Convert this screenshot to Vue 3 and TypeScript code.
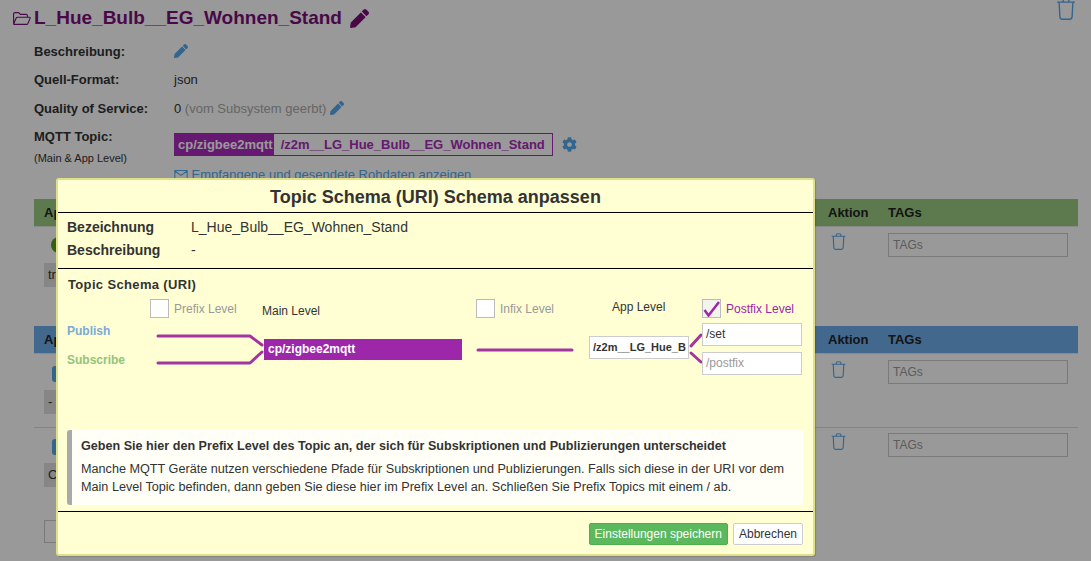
<script setup lang="ts">
const penPath = 'M497.9 142.1l-46.1 46.1c-4.7 4.7-12.3 4.7-17 0l-111-111c-4.7-4.7-4.7-12.3 0-17l46.1-46.1c18.7-18.7 49.1-18.7 67.9 0l60.1 60.1c18.8 18.7 18.8 49.1 0 67.9zM284.2 99.8L21.6 362.4.4 483.9c-2.9 16.4 11.4 30.6 27.8 27.8l121.5-21.3 262.6-262.6c4.7-4.7 4.7-12.3 0-17l-111-111c-4.8-4.7-12.4-4.7-17.1 0z'
const trashPath = 'M1 5h22M8.500 5V3a2 2 0 0 1 2-2h3a2 2 0 0 1 2 2v2M3.500 5l1 18a3 3 0 0 0 3 3h9a3 3 0 0 0 3-3l1-18'
const blueRows = [
  { cls: 'row-b', chip: '-' },
  { cls: 'row-c', chip: 'C' },
]
</script>

<template>
  <div class="page">
    <div class="head">
      <svg class="folder" viewBox="0 0 18 13" width="18" height="13"><path d="M.6 12V2A1.400 1.400 0 0 1 2 .6h3.600l1.800 1.800H13a1.400 1.400 0 0 1 1.400 1.400v1.400M.6 12l2.600-6a1.300 1.300 0 0 1 1.200-.8h12a.8.8 0 0 1 .7 1.200l-2.300 5.300a1.300 1.300 0 0 1-1.200.7H1.400A.8.8 0 0 1 .6 12z" fill="none" stroke="currentColor" stroke-width="1.100"/></svg>
      <h1>L_Hue_Bulb__EG_Wohnen_Stand</h1>
      <svg class="pen" viewBox="0 0 512 512" width="19" height="19"><path fill="currentColor" :d="penPath"/></svg>
      <svg class="trash top-trash" viewBox="0 0 24 27" width="20" height="22"><path :d="trashPath" fill="none" stroke="currentColor" stroke-width="1.700"/></svg>
    </div>

    <dl class="meta">
      <dt>Beschreibung:</dt>
      <dd><svg class="pen-sm" viewBox="0 0 512 512" width="14" height="14"><path fill="currentColor" :d="penPath"/></svg></dd>
      <dt>Quell-Format:</dt>
      <dd>json</dd>
      <dt>Quality of Service:</dt>
      <dd>0 <span class="muted">(vom Subsystem geerbt)</span> <svg class="pen-sm" viewBox="0 0 512 512" width="14" height="14"><path fill="currentColor" :d="penPath"/></svg></dd>
      <dt class="topic-label">MQTT Topic:<small>(Main &amp; App Level)</small></dt>
      <dd class="topic-value">
        <div class="topic-line">
          <div class="topic"><b>cp/zigbee2mqtt</b><span>/z2m__LG_Hue_Bulb__EG_Wohnen_Stand</span></div>
          <svg class="gear" viewBox="0 0 512 512" width="15" height="15"><path fill="currentColor" d="M487.400 315.700l-42.600-24.600c4.300-23.200 4.300-47 0-70.200l42.600-24.600c4.900-2.800 7.100-8.600 5.500-14-11.100-35.600-30-67.800-54.700-94.600-3.800-4.100-10-5.100-14.800-2.300L380.800 110c-17.900-15.400-38.500-27.300-60.800-35.100V25.800c0-5.600-3.900-10.500-9.400-11.700-36.700-8.200-74.300-7.800-109.200 0-5.500 1.200-9.400 6.100-9.400 11.700V75c-22.200 7.900-42.800 19.800-60.800 35.100L88.700 85.500c-4.900-2.800-11-1.900-14.800 2.300-24.700 26.700-43.600 58.900-54.700 94.600-1.700 5.400.6 11.200 5.500 14L67.300 221c-4.300 23.200-4.300 47 0 70.200l-42.600 24.600c-4.900 2.800-7.100 8.600-5.500 14 11.100 35.600 30 67.800 54.700 94.600 3.800 4.100 10 5.100 14.800 2.300l42.600-24.600c17.900 15.400 38.500 27.300 60.800 35.100v49.200c0 5.600 3.900 10.500 9.400 11.700 36.700 8.200 74.300 7.800 109.200 0 5.500-1.200 9.400-6.100 9.400-11.700v-49.200c22.200-7.900 42.800-19.800 60.800-35.100l42.600 24.600c4.900 2.800 11 1.900 14.800-2.300 24.700-26.700 43.600-58.900 54.700-94.600 1.500-5.500-.7-11.300-5.600-14.100zM256 336c-44.100 0-80-35.900-80-80s35.900-80 80-80 80 35.900 80 80-35.900 80-80 80z"/></svg>
        </div>
        <a class="raw"><svg viewBox="0 0 16 12" width="14" height="11"><path d="M1 1.500h14v9H1zM1 2l7 5 7-5" fill="none" stroke="currentColor" stroke-width="1.200"/></svg> Empfangene und gesendete Rohdaten anzeigen</a>
      </dd>
    </dl>

    <section class="table green">
      <div class="thead"><span class="col-app">App</span><span class="col-act">Aktion</span><span class="col-tag">TAGs</span></div>
      <div class="row row-a">
        <div class="col-app"><i class="dot"></i><div class="chip">tr</div></div>
        <div class="col-act"><svg class="trash" viewBox="0 0 24 27" width="15" height="17"><path :d="trashPath" fill="none" stroke="currentColor" stroke-width="1.800"/></svg></div>
        <div class="col-tag"><div class="tags">TAGs</div></div>
      </div>
    </section>

    <section class="table blue">
      <div class="thead"><span class="col-app">App</span><span class="col-act">Aktion</span><span class="col-tag">TAGs</span></div>
      <div v-for="r in blueRows" :key="r.cls" class="row" :class="r.cls">
        <div class="col-app"><i class="pill"></i><div class="chip">{{ r.chip }}</div></div>
        <div class="col-act"><svg class="trash" viewBox="0 0 24 27" width="15" height="17"><path :d="trashPath" fill="none" stroke="currentColor" stroke-width="1.800"/></svg></div>
        <div class="col-tag"><div class="tags">TAGs</div></div>
      </div>
    </section>
    <div class="add-box"></div>

    <div class="overlay"></div>

    <div class="modal">
      <h2>Topic Schema (URI) Schema anpassen</h2>
      <div class="info">
        <div class="info-row"><b>Bezeichnung</b><span>L_Hue_Bulb__EG_Wohnen_Stand</span></div>
        <div class="info-row"><b>Beschreibung</b><span>-</span></div>
      </div>
      <div class="schema">
        <h3>Topic Schema (URI)</h3>
        <div class="canvas">
          <label class="check n-prefix"><i class="cb"></i>Prefix Level</label>
          <span class="lvl n-main">Main Level</span>
          <label class="check n-infix"><i class="cb"></i>Infix Level</label>
          <span class="lvl n-app">App Level</span>
          <label class="check on n-postfix"><i class="cb"><svg viewBox="0 0 18 18" width="18" height="18"><path d="M1.500 11l4 5.500L16 3" fill="none" stroke="#9c27a8" stroke-width="2.500"/></svg></i>Postfix Level</label>
          <b class="pub n-pub">Publish</b>
          <b class="sub n-sub">Subscribe</b>
          <svg class="wires" viewBox="0 0 759 120" width="759" height="120">
            <g fill="none" stroke="#a2359f" stroke-width="3" stroke-linecap="round" stroke-linejoin="round">
              <path d="M102 37h92l12 9M102 64h92l12-11"/>
              <path d="M422 51h94"/>
              <path d="M635 47l10-11M635 54l10 9"/>
            </g>
          </svg>
          <div class="main-topic n-topic">cp/zigbee2mqtt</div>
          <div class="field n-appf strong">/z2m__LG_Hue_B</div>
          <div class="field n-set">/set</div>
          <div class="field n-postf ph">/postfix</div>
        </div>
      </div>
      <div class="hint">
        <b>Geben Sie hier den Prefix Level des Topic an, der sich für Subskriptionen und Publizierungen unterscheidet</b>
        <p>Manche MQTT Geräte nutzen verschiedene Pfade für Subskriptionen und Publizierungen. Falls sich diese in der URI vor dem Main Level Topic befinden, dann geben Sie diese hier im Prefix Level an. Schließen Sie Prefix Topics mit einem / ab.</p>
      </div>
      <div class="foot">
        <button class="save">Einstellungen speichern</button>
        <button class="cancel">Abbrechen</button>
      </div>
    </div>
  </div>
</template>

<style>
html, body { margin: 0; overflow: hidden; }
</style>

<style scoped>
.page {
  position: relative;
  width: 1091px;
  height: 561px;
  overflow: hidden;
  background: #fff;
  font-family: "Liberation Sans", Arial, sans-serif;
  font-size: 13px;
  color: #333;
  padding: 0 13px 0 34px;
  box-sizing: border-box;
}
.head { display: flex; align-items: center; height: 36px; color: #7b0f7b; margin-left: -21px; }
.head h1 { margin: 0 8px 0 3px; font-size: 19px; font-weight: 700; }
.folder { color: #7b0f7b; margin-top: 1px; }
.top-trash { position: absolute; right: 15px; top: -2px; }
.trash { color: #57a8ea; }
.meta {
  margin: 1.500px 0 0;
  display: grid;
  grid-template-columns: 140px 1fr;
  grid-auto-rows: 28.500px;
  line-height: 28px;
}
.meta dt { font-weight: 700; }
.meta dd { margin: 0; }
.muted { color: #aaa; }
.pen-sm { color: #57a8ea; vertical-align: -2px; }
.topic-label { line-height: 16px; padding-top: 6px; }
.topic-label small { display: block; font-size: 11px; font-weight: 400; margin-top: 5px; }
.topic-value { padding-top: 10px; }
.topic-line { display: flex; align-items: center; gap: 9px; height: 23px; }
.topic { display: flex; align-items: stretch; width: 379px; height: 23px; box-sizing: border-box; border: 1px solid #aa2bbb; line-height: 21px; font-weight: 700; color: #aa2bbb; }
.topic b { background: #aa2bbb; color: #fff; padding: 0 1px 0 4px; margin: -1px 0 -1px -1px; line-height: 23px; }
.topic span { padding-left: 7px; }
.gear { color: #57a8ea; }
.raw { display: block; color: #57a8ea; line-height: 16px; margin-top: 11px; }
.raw svg { vertical-align: -1px; }

.table { position: absolute; left: 34px; width: 1044px; }
.green { top: 199px; }
.blue { top: 326px; }
.thead { height: 27px; line-height: 27px; font-weight: 700; display: flex; color: #222; box-shadow: 0 1px 0 rgba(0,0,0,.1); }
.green .thead { background: #99cc80; }
.blue .thead { background: #70aeec; }
.col-app { width: 794px; padding-left: 10px; box-sizing: border-box; }
.col-act { width: 60px; box-sizing: border-box; }
.row .col-act { padding-left: 3px; }
.col-tag { width: 190px; }
.row { display: flex; }
.row-a { height: 93px; padding-top: 7px; }
.row-b { height: 67px; padding-top: 7px; border-bottom: 1px solid #ddd; }
.row-b .col-act { padding-top: 1px; }
.row-c { padding-top: 5px; }
.tags { width: 180px; height: 24px; box-sizing: border-box; border: 1px solid #ccc; line-height: 22px; padding-left: 4px; font-size: 12px; color: #999; background: #fff; }
.dot { display: block; width: 16px; height: 16px; border-radius: 50%; background: #55a020; margin: 4px 0 10px 7px; }
.pill { display: block; width: 14px; height: 16px; border-radius: 3px; background: #57a8ea; margin: 6px 0 8px 8px; }
.chip { width: 60px; height: 24px; background: #e0e0e0; line-height: 24px; padding-left: 4px; box-sizing: border-box; }
.add-box { position: absolute; left: 44px; top: 520px; width: 40px; height: 23px; border: 1px solid #ccc; box-sizing: border-box; }
.overlay { position: absolute; inset: 0; background: rgba(0,0,0,.4); }

.modal {
  position: absolute;
  left: 56px;
  top: 178px;
  width: 759px;
  height: 378px;
  box-sizing: border-box;
  background: #ffffd3;
  border: 2px solid #e0e08a;
  border-radius: 3px;
  box-shadow: 1px 1px 1px rgba(0,0,0,.15);
  display: flex;
  flex-direction: column;
  color: #333;
  font-size: 12px;
}
h2 { margin: 0; height: 32px; line-height: 34px; font-size: 18px; text-align: center; font-weight: 700; border-bottom: 1px solid #000; box-sizing: content-box; }
.info { padding: 3px 9px 0; height: 52px; border-bottom: 1px solid #000; }
.info-row { display: flex; height: 23px; line-height: 23px; font-size: 14px; }
.info-row b { width: 124px; }
.schema { height: 161px; }
h3 { margin: 0; font-size: 13px; padding: 8px 0 0 10px; line-height: 15px; letter-spacing: .35px; }
.canvas { position: relative; height: 123px; margin-top: 7px; }
.wires { position: absolute; left: -2px; top: 0; pointer-events: none; }
.check { position: absolute; display: flex; align-items: center; gap: 5px; color: #999; white-space: nowrap; }
.cb { display: block; width: 19px; height: 19px; background: #fff; border: 1px solid #bbb; box-sizing: border-box; position: relative; }
.cb svg { position: absolute; left: 0; top: -1px; }
.check.on { color: #9c27a8; }
.check.on .cb { background: #f4f4ee; }
.lvl { position: absolute; color: #333; }
.pub, .sub { position: absolute; }
.pub { color: #7aaad8; }
.sub { color: #93c47d; }
.main-topic { position: absolute; width: 198px; height: 21px; line-height: 21px; background: #9c27a8; color: #fff; font-weight: 700; padding-left: 4px; box-sizing: border-box; }
.field { position: absolute; height: 23px; line-height: 21px; background: #fff; border: 1px solid #ccc; box-sizing: border-box; padding-left: 3px; white-space: nowrap; }
.field.strong { font-weight: 700; font-size: 11px; }
.field.ph { color: #999; }
.n-prefix { left: 92px; top: 0; }
.n-main { left: 204px; top: 5px; }
.n-infix { left: 418px; top: 0; }
.n-app { left: 554px; top: 1px; }
.n-postfix { left: 644px; top: 0; }
.n-pub { left: 9px; top: 25px; }
.n-sub { left: 9px; top: 54px; }
.n-topic { left: 206px; top: 40px; }
.n-appf { left: 531px; top: 37px; width: 100px; }
.n-set { left: 644px; top: 24px; width: 100px; }
.n-postf { left: 644px; top: 53px; width: 100px; }

.hint { margin: 0 10px 0 9px; height: 75px; box-sizing: border-box; background: #fffff8; border-left: 5px solid #a9a9a9; border-radius: 3px; padding: 8px 10px 0 9px; }
.hint b { display: block; font-size: 12.600px; line-height: 16px; }
.hint p { margin: 6px 0 0; line-height: 18px; font-size: 12.650px; }
.foot { margin-top: 6px; border-top: 1px solid #000; flex: 1; display: flex; justify-content: flex-end; align-items: flex-start; gap: 5px; padding: 11px 10px 0 0; }
button { font: inherit; height: 22px; line-height: 20px; padding: 0 5px; border-radius: 2px; box-sizing: border-box; }
.save { background: #5cb85c; color: #fff; border: 1px solid #4cae4c; }
.cancel { background: #fff; color: #333; border: 1px solid #ccc; }
</style>
